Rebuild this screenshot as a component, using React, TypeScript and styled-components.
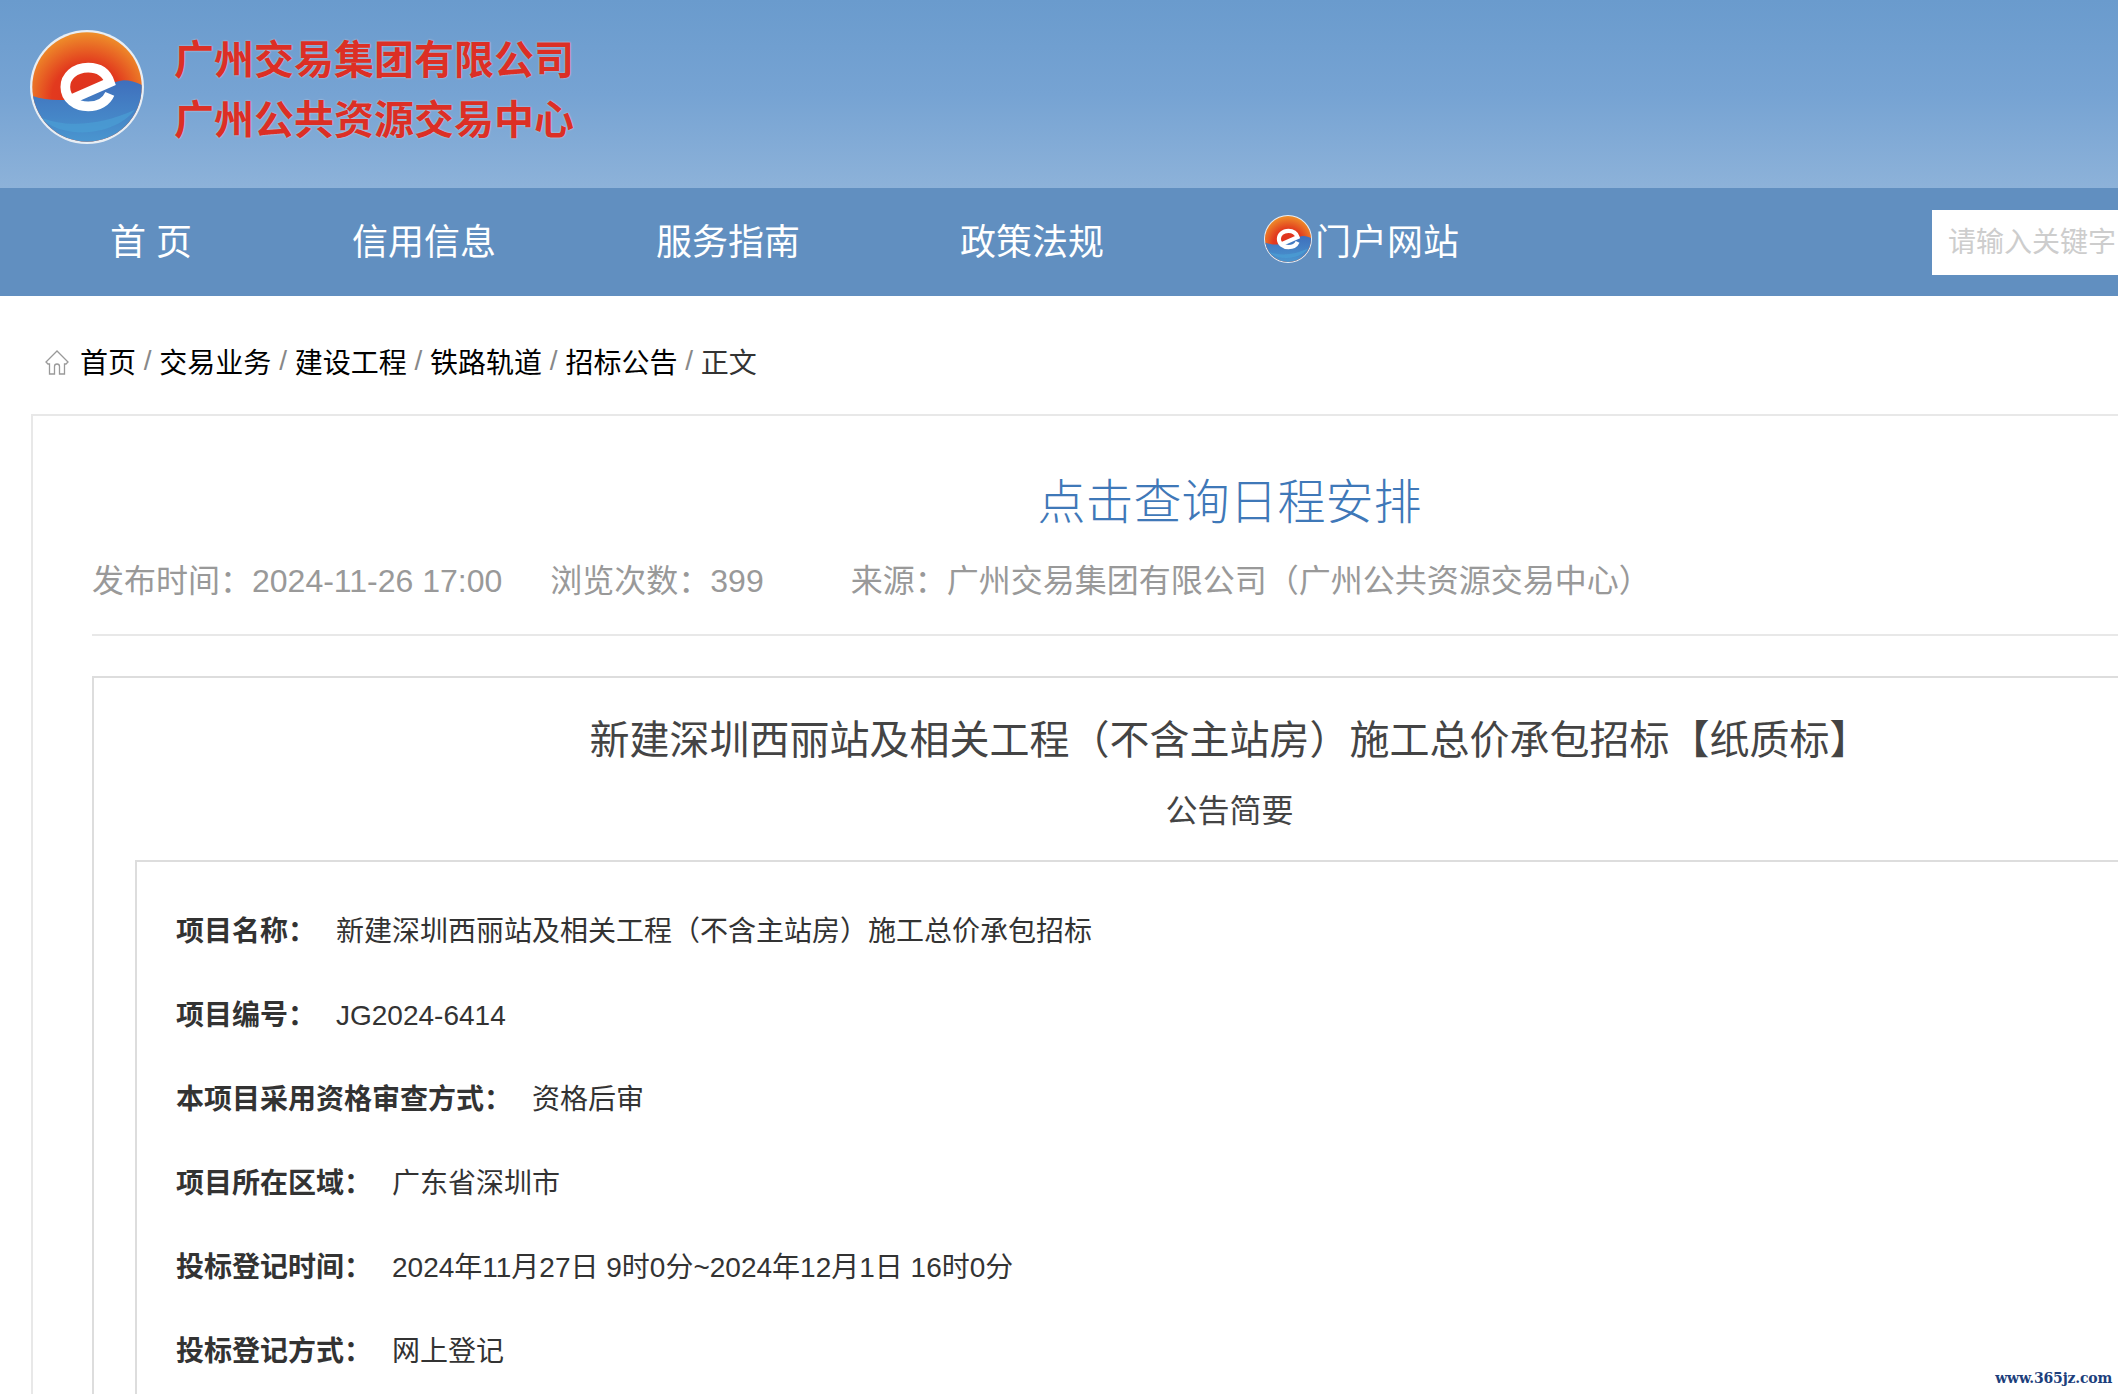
import React from "react";
import styled, { createGlobalStyle } from "styled-components";

const Global = createGlobalStyle`
  html, body { margin: 0; padding: 0; background: #fff; overflow: hidden; }
  body { font-family: "Liberation Sans", "Noto Sans CJK SC", sans-serif; color: #333; }
  * { box-sizing: border-box; }
`;

const Page = styled.div`
  position: relative;
  width: 2118px;
  height: 1394px;
  overflow: hidden;
`;
const Wide = styled.div`
  width: 2462px;
`;
const Header = styled.header`
  height: 188px;
  display: flex;
  align-items: flex-start;
  gap: 30px;
  padding: 30px 0 0 30px;
  background: linear-gradient(180deg, #6a9bcd 0%, #76a3d3 50%, #8db2d9 100%);
`;
const TitleStack = styled.div`
  display: flex;
  flex-direction: column;
  gap: 19px;
  margin-top: 10px;
`;
const BrandLine = styled.div`
  font-size: 40px;
  line-height: 41px;
  font-weight: 700;
  color: #dc2f25;
  white-space: nowrap;
  text-shadow: 0 0 2px rgba(255, 225, 225, 0.75);
`;
const Nav = styled.nav`
  height: 108px;
  display: flex;
  align-items: center;
  gap: 160px;
  padding-left: 110px;
  background: #618fc0;
`;
const NavItem = styled.a`
  display: flex;
  align-items: center;
  padding-bottom: 6px;
  font-size: 36px;
  font-weight: 400;
  color: #fff;
  white-space: pre;
`;
const LogoMark = styled.svg<{ $gap?: number }>`
  flex: none;
  margin-right: ${(p) => p.$gap ?? 0}px;
`;
const Search = styled.div`
  width: 300px;
  height: 65px;
  margin-left: 313px;
  padding-left: 16px;
  background: #fff;
  color: #cdcdcd;
  font-size: 28px;
  line-height: 65px;
  white-space: nowrap;
`;
const Crumbs = styled.div`
  height: 118px;
  display: flex;
  align-items: center;
  padding: 11px 0 0 45px;
  font-size: 28px;
  color: #000;
  white-space: pre;
`;
const HomeIcon = styled.svg`
  width: 24px;
  height: 25px;
  margin: 4px 11px 0 0;
`;
const Sep = styled.span`
  color: #888;
`;
const Current = styled.span`
  color: #333;
`;
const Outer = styled.section`
  width: 2397px;
  margin-left: 31px;
  padding: 44px 59px 0;
  border: 2px solid #e8e8e8;
  border-bottom: 0;
`;
const Schedule = styled.a`
  display: block;
  text-align: center;
  font-size: 48px;
  line-height: 86px;
  color: #3f78b8;
  font-weight: 300;
`;
const Meta = styled.div`
  margin-top: 10px;
  padding-bottom: 28px;
  display: flex;
  font-size: 32px;
  line-height: 50px;
  color: #999;
  border-bottom: 2px solid #e8e8e8;
  white-space: nowrap;
`;
const MetaItem = styled.span<{ $gap: number }>`
  margin-right: ${(p) => p.$gap}px;
`;
const Notice = styled.div`
  margin-top: 40px;
  padding: 32px 41px 0;
  border: 2px solid #ddd;
  border-bottom: 0;
`;
const NoticeTitle = styled.h1`
  margin: 0;
  text-align: center;
  font-size: 40px;
  line-height: 60px;
  font-weight: 400;
  color: #444;
`;
const NoticeSub = styled.h2`
  margin: 19px 0 0;
  text-align: center;
  font-size: 32px;
  line-height: 44px;
  font-weight: 400;
  color: #444;
`;
const Summary = styled.div`
  margin-top: 27px;
  padding: 28px 39px 0;
  border: 2px solid #ddd;
  border-bottom: 0;
`;
const Row = styled.div`
  display: flex;
  height: 84px;
  font-size: 28px;
  line-height: 84px;
  color: #333;
  white-space: nowrap;
`;
const Label = styled.b`
  margin-right: 20px;
  font-weight: 700;
`;
const Watermark = styled.div`
  position: absolute;
  right: 6px;
  bottom: 8px;
  font-family: "DejaVu Serif", serif;
  font-size: 14px;
  font-weight: 700;
  letter-spacing: -0.2px;
  line-height: 16px;
  color: #1d3f7c;
`;

const Logo = ({ size, gap }: { size: number; gap?: number }) => (
  <LogoMark $gap={gap} width={size} height={size} viewBox="0 0 100 100">
    <defs>
      <radialGradient id="sun" cx="0.5" cy="0.6" r="0.62">
        <stop offset="0" stopColor="#de2f1e" />
        <stop offset="0.5" stopColor="#e23a1e" />
        <stop offset="1" stopColor="#f09c2c" />
      </radialGradient>
      <linearGradient id="sea" x1="0" y1="0" x2="0" y2="1">
        <stop offset="0" stopColor="#3f6fbc" />
        <stop offset="1" stopColor="#4a97d0" />
      </linearGradient>
      <clipPath id="disc">
        <circle cx="50" cy="50" r="48" />
      </clipPath>
    </defs>
    <circle cx="50" cy="50" r="50" fill="#e8eef4" />
    <g clipPath="url(#disc)">
      <rect width="100" height="100" fill="url(#sun)" />
      <path d="M0 57 C14 62 28 63 44 59 C58 55 70 45 82 44 C88 44 94 46 100 49 V100 H0 Z" fill="url(#sea)" />
      <path d="M8 76 C30 86 62 84 92 70 C76 92 30 98 8 76 Z" fill="#4a9ed4" opacity="0.7" />
    </g>
    <path
      d="M38 60 L70 46 C67 37 60 33 51 33 C39 33 31 41 31 50 C31 60 40 67 51 67 C60 67 67 63 70 56"
      fill="none"
      stroke="#fff"
      strokeWidth="8.5"
    />
  </LogoMark>
);

const rows: [string, string][] = [
  ["项目名称：", "新建深圳西丽站及相关工程（不含主站房）施工总价承包招标"],
  ["项目编号：", "JG2024-6414"],
  ["本项目采用资格审查方式：", "资格后审"],
  ["项目所在区域：", "广东省深圳市"],
  ["投标登记时间：", "2024年11月27日 9时0分~2024年12月1日 16时0分"],
  ["投标登记方式：", "网上登记"],
];

const crumbs = ["首页", "交易业务", "建设工程", "铁路轨道", "招标公告"];

export default function App() {
  return (
    <Page>
      <Global />
      <Wide>
        <Header>
          <Logo size={114} />
          <TitleStack>
            <BrandLine>广州交易集团有限公司</BrandLine>
            <BrandLine>广州公共资源交易中心</BrandLine>
          </TitleStack>
        </Header>
        <Nav>
          <NavItem>首 页</NavItem>
          <NavItem>信用信息</NavItem>
          <NavItem>服务指南</NavItem>
          <NavItem>政策法规</NavItem>
          <NavItem>
            <Logo size={48} gap={3} />
            门户网站
          </NavItem>
          <Search>请输入关键字</Search>
        </Nav>
        <Crumbs>
          <HomeIcon viewBox="0 0 24 25" fill="none" stroke="#999" strokeWidth="1.3">
            <path d="M12 1 L1 12 L3 14 H4.5 V24 H9.5 V16.5 Q9.5 14 12 14 Q14.5 14 14.5 16.5 V24 H19.5 V14 H21 L23 12 Z" />
          </HomeIcon>
          {crumbs.map((c) => (
            <React.Fragment key={c}>
              {c}
              <Sep> / </Sep>
            </React.Fragment>
          ))}
          <Current>正文</Current>
        </Crumbs>
        <Outer>
          <Schedule>点击查询日程安排</Schedule>
          <Meta>
            <MetaItem $gap={48}>发布时间：2024-11-26 17:00</MetaItem>
            <MetaItem $gap={87}>浏览次数：399</MetaItem>
            <MetaItem $gap={0}>来源：广州交易集团有限公司（广州公共资源交易中心）</MetaItem>
          </Meta>
          <Notice>
            <NoticeTitle>新建深圳西丽站及相关工程（不含主站房）施工总价承包招标【纸质标】</NoticeTitle>
            <NoticeSub>公告简要</NoticeSub>
            <Summary>
              {rows.map(([k, v]) => (
                <Row key={k}>
                  <Label>{k}</Label>
                  <span>{v}</span>
                </Row>
              ))}
            </Summary>
          </Notice>
        </Outer>
      </Wide>
      <Watermark>www.365jz.com</Watermark>
    </Page>
  );
}
